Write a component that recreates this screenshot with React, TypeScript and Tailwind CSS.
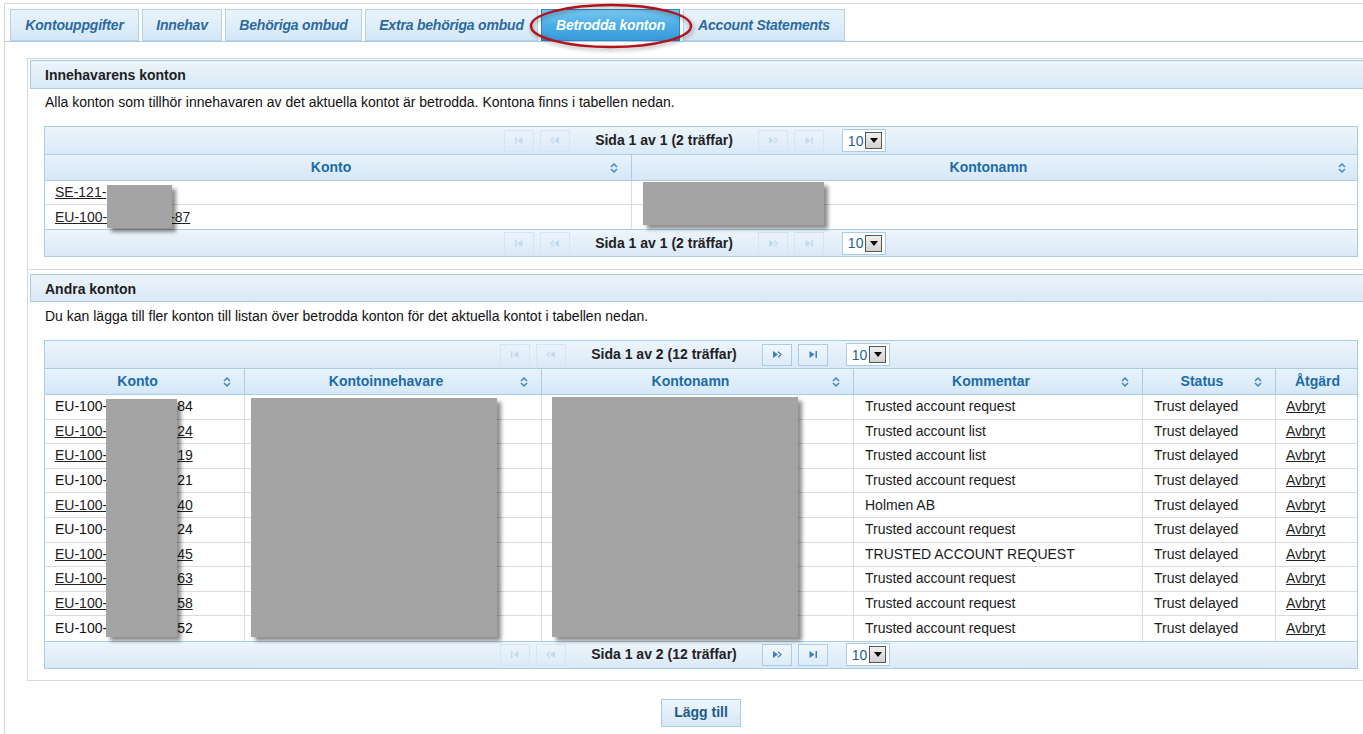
import React from "react";

type Row = { suf: string; link: boolean; kommentar: string };

const rows: Row[] = [
  { suf: "84", link: false, kommentar: "Trusted account request" },
  { suf: "24", link: true, kommentar: "Trusted account list" },
  { suf: "19", link: true, kommentar: "Trusted account list" },
  { suf: "21", link: false, kommentar: "Trusted account request" },
  { suf: "40", link: true, kommentar: "Holmen AB" },
  { suf: "24", link: false, kommentar: "Trusted account request" },
  { suf: "45", link: true, kommentar: "TRUSTED ACCOUNT REQUEST" },
  { suf: "63", link: true, kommentar: "Trusted account request" },
  { suf: "58", link: true, kommentar: "Trusted account request" },
  { suf: "52", link: false, kommentar: "Trusted account request" },
];

const tabs = [
  { label: "Kontouppgifter", w: "w-[129px]" },
  { label: "Innehav", w: "w-[80px]" },
  { label: "Behöriga ombud", w: "w-[137px]" },
  { label: "Extra behöriga ombud", w: "w-[173px]" },
  { label: "Betrodda konton", w: "w-[139px]", active: true },
  { label: "Account Statements", w: "w-[162px]" },
];

function SortIcon() {
  return (
    <svg width="8" height="11" viewBox="0 0 8 11" className="absolute right-[13px] top-1/2 -translate-y-1/2">
      <path d="M1 4.5 L4 1.5 L7 4.5" fill="none" stroke="#3f87c4" strokeWidth="1.5" />
      <path d="M1 6.5 L4 9.5 L7 6.5" fill="none" stroke="#3f87c4" strokeWidth="1.5" />
    </svg>
  );
}

function PagerIcon({ kind, on }: { kind: "first" | "prev" | "next" | "last"; on: boolean }) {
  const c = on ? "#3d7fbf" : "#c3d9ec";
  return (
    <svg width="10" height="7" viewBox="0 0 10 7">
      {kind === "first" && (
        <>
          <rect x="1" y="0" width="1.5" height="7" fill={c} />
          <path d="M3.5 3.5 L8.5 0 L8.5 7Z" fill={c} />
        </>
      )}
      {kind === "prev" && (
        <>
          <path d="M4 0.8 L0.8 3.5 L4 6.2" fill="none" stroke={c} strokeWidth="1.2" />
          <path d="M4 3.5 L9 0 L9 7Z" fill={c} />
        </>
      )}
      {kind === "next" && (
        <>
          <path d="M1 0 L6 3.5 L1 7Z" fill={c} />
          <path d="M6 0.8 L9.2 3.5 L6 6.2" fill="none" stroke={c} strokeWidth="1.2" />
        </>
      )}
      {kind === "last" && (
        <>
          <path d="M1.5 0 L6.5 3.5 L1.5 7Z" fill={c} />
          <rect x="7.5" y="0" width="1.5" height="7" fill={c} />
        </>
      )}
    </svg>
  );
}

function PagerBtn({ kind, on }: { kind: "first" | "prev" | "next" | "last"; on: boolean }) {
  return (
    <div
      className={
        on
          ? "w-[30px] h-[22px] flex items-center justify-center border border-[#a9cde9] bg-gradient-to-b from-[#f1f7fc] to-[#dcebf7]"
          : "w-[30px] h-[22px] flex items-center justify-center border border-[#d4e6f4]"
      }
    >
      <PagerIcon kind={kind} on={on} />
    </div>
  );
}

function Pager({ text, more, border }: { text: string; more: boolean; border: "b" | "t" }) {
  return (
    <div
      className={
        (border === "b" ? "h-[28px] border-b " : "h-[27px] border-t ") +
        "border-[#a9cde9] bg-gradient-to-b from-[#edf5fc] to-[#dbe9f6] flex items-center justify-center pr-[12px]"
      }
    >
      <PagerBtn kind="first" on={false} />
      <div className="w-[6px]" />
      <PagerBtn kind="prev" on={false} />
      <span className="mx-[25px] text-[14px] font-bold text-[#222]">{text}</span>
      <PagerBtn kind="next" on={more} />
      <div className="w-[6px]" />
      <PagerBtn kind="last" on={more} />
      <div className="ml-[18px] w-[44px] h-[23px] bg-white border border-[#a9cde9] flex items-center pl-[5px] gap-[2px]">
        <span className="text-[14px] text-[#1f5f95] leading-none">10</span>
        <div className="w-[17px] h-[17px] border border-[#555] bg-gradient-to-b from-[#f0f0f0] to-[#d2d2d2] flex items-center justify-center">
          <svg width="8" height="5" viewBox="0 0 8 5">
            <path d="M0 0 L8 0 L4 5Z" fill="#000" />
          </svg>
        </div>
      </div>
    </div>
  );
}

function Redact({ cls }: { cls: string }) {
  return <div className={"absolute bg-[#a4a4a4] shadow-[4px_4px_4px_rgba(0,0,0,0.45)] " + cls} />;
}

function HeadCell({ label, sort = true, cls }: { label: string; sort?: boolean; cls: string }) {
  return (
    <div className={"relative h-full flex items-center justify-center font-bold text-[14px] text-[#1b6ca6] " + (sort ? "pr-[14px] " : "") + cls}>
      {label}
      {sort && <SortIcon />}
    </div>
  );
}

function SectionHeader({ title, h }: { title: string; h: string }) {
  return (
    <div className={h + " border border-[#a9cde9] bg-gradient-to-b from-[#ecf4fb] to-[#dae9f6] flex items-center pl-[14px] pt-[2px] text-[14px] font-bold text-[#1e1e1e]"}>
      {title}
    </div>
  );
}

export default function App() {
  return (
    <div className="relative w-[1363px] h-[734px] overflow-hidden bg-white font-['Liberation_Sans',Arial,sans-serif] text-[#1b1b1b]">
      <div className="ml-[4px] mt-[3px] w-[1420px] h-[731px] border-l border-t border-[#d6d6d6]">
        {/* Tabs */}
        <div id="tabs" className="flex pl-[5px] pt-[5px] gap-[3px] border-b border-[#a9cde9]">
          {tabs.map((t) => (
            <div
              key={t.label}
              className={
                t.w +
                " h-[32px] flex items-center justify-center italic font-bold text-[14px] tracking-[-0.2px] border " +
                (t.active
                  ? "border-[#2f86c6] bg-gradient-to-b from-[#78c8f1] via-[#4aaee6] to-[#389bd9] text-white"
                  : "border-[#b3d3eb] bg-gradient-to-b from-[#eaf4fc] to-[#d4e7f6] text-[#2c6a9f]")
              }
            >
              {t.label}
            </div>
          ))}
        </div>

        {/* Content box */}
        <div className="ml-[22px] mt-[16px] w-[1348px] border border-[#d8d8d8] pt-[1px] px-[2px] pb-[11px]">
          {/* Innehavarens konton */}
          <div className="-mx-[2px] px-[2px] pb-[12px] border-b border-[#d8d8d8]">
            <SectionHeader title="Innehavarens konton" h="h-[29px]" />
            <div className="pl-[15px] pt-[4px] leading-[18px] text-[14px] text-[#111]">
              Alla konton som tillhör innehavaren av det aktuella kontot är betrodda. Kontona finns i tabellen nedan.
            </div>
            <div className="relative ml-[14px] mt-[15px] w-[1314px] border border-[#a9cde9]">
              <Pager text="Sida 1 av 1 (2 träffar)" more={false} border="b" />
              <div className="grid grid-cols-[587px_727px] h-[26px] border-b border-[#a9cde9] bg-gradient-to-b from-[#e8f3fc] to-[#d5e7f6]">
                <HeadCell label="Konto" cls="border-r border-[#a9cde9]" />
                <HeadCell label="Kontonamn" cls="" />
              </div>
              <div className="grid grid-cols-[587px_727px] h-[24px] border-b border-[#dcdcdc] text-[14px]">
                <div className="border-r border-[#dcdcdc] pl-[10px] flex items-center">
                  <span className="underline text-[#222]">
                    SE-121-<span className="inline-block w-[60px]" />
                  </span>
                </div>
                <div />
              </div>
              <div className="grid grid-cols-[587px_727px] h-[24px] text-[14px]">
                <div className="border-r border-[#dcdcdc] pl-[10px] flex items-center">
                  <span className="underline text-[#222]">
                    EU-100-<span className="inline-block w-[63px]" />-87
                  </span>
                </div>
                <div />
              </div>
              <Pager text="Sida 1 av 1 (2 träffar)" more={false} border="t" />
              <Redact cls="left-[62px] top-[58px] w-[65px] h-[43px]" />
              <Redact cls="left-[598px] top-[55px] w-[181px] h-[43px]" />
            </div>
          </div>

          {/* Andra konton */}
          <div className="pt-[4px]">
            <SectionHeader title="Andra konton" h="h-[28px]" />
            <div className="pl-[15px] pt-[5px] leading-[18px] text-[14px] text-[#111]">
              Du kan lägga till fler konton till listan över betrodda konton för det aktuella kontot i tabellen nedan.
            </div>
            <div className="relative ml-[14px] mt-[15px] w-[1314px] border border-[#a9cde9]">
              <Pager text="Sida 1 av 2 (12 träffar)" more={true} border="b" />
              <div className="grid grid-cols-[200px_297px_312px_289px_133px_83px] h-[26px] border-b border-[#a9cde9] bg-gradient-to-b from-[#e8f3fc] to-[#d5e7f6]">
                <HeadCell label="Konto" cls="border-r border-[#a9cde9]" />
                <HeadCell label="Kontoinnehavare" cls="border-r border-[#a9cde9]" />
                <HeadCell label="Kontonamn" cls="border-r border-[#a9cde9]" />
                <HeadCell label="Kommentar" cls="border-r border-[#a9cde9]" />
                <HeadCell label="Status" cls="border-r border-[#a9cde9]" />
                <HeadCell label="Åtgärd" sort={false} cls="" />
              </div>
              {rows.map((r, i) => (
                <div
                  key={i}
                  className={
                    "grid grid-cols-[200px_297px_312px_289px_133px_83px] h-[24.6px] text-[14px] " +
                    (i < rows.length - 1 ? "border-b border-[#dcdcdc]" : "")
                  }
                >
                  <div className="border-r border-[#dcdcdc] pl-[10px] flex items-center">
                    <span className={r.link ? "underline text-[#222]" : "text-[#111]"}>
                      EU-100-<span className="inline-block w-[70px]" />
                      {r.suf}
                    </span>
                  </div>
                  <div className="border-r border-[#dcdcdc]" />
                  <div className="border-r border-[#dcdcdc]" />
                  <div className="border-r border-[#dcdcdc] pl-[11px] flex items-center">{r.kommentar}</div>
                  <div className="border-r border-[#dcdcdc] pl-[11px] flex items-center">Trust delayed</div>
                  <div className="pl-[10px] flex items-center">
                    <span className="underline text-[#222]">Avbryt</span>
                  </div>
                </div>
              ))}
              <Pager text="Sida 1 av 2 (12 träffar)" more={true} border="t" />
              <Redact cls="left-[61px] top-[58px] w-[71px] h-[238px]" />
              <Redact cls="left-[206px] top-[57px] w-[246px] h-[239px]" />
              <Redact cls="left-[507px] top-[56px] w-[246px] h-[240px]" />
            </div>
          </div>
        </div>

        {/* Lägg till */}
        <div className="ml-[22px] w-[1348px] mt-[18px] flex justify-center">
          <button className="w-[80px] h-[28px] border border-[#a9cde9] bg-gradient-to-b from-[#edf5fc] to-[#d8e8f6] text-[14px] font-bold text-[#1d5c8c]">
            Lägg till
          </button>
        </div>
      </div>

      {/* red highlight around active tab */}
      <svg
        width="168"
        height="50"
        viewBox="0 0 168 50"
        className="absolute left-[527px] top-[2px] drop-shadow-[1px_2px_2px_rgba(0,0,0,0.35)]"
      >
        <ellipse cx="84" cy="24" rx="80" ry="21" fill="none" stroke="#b3121c" strokeWidth="2.5" />
      </svg>
    </div>
  );
}
